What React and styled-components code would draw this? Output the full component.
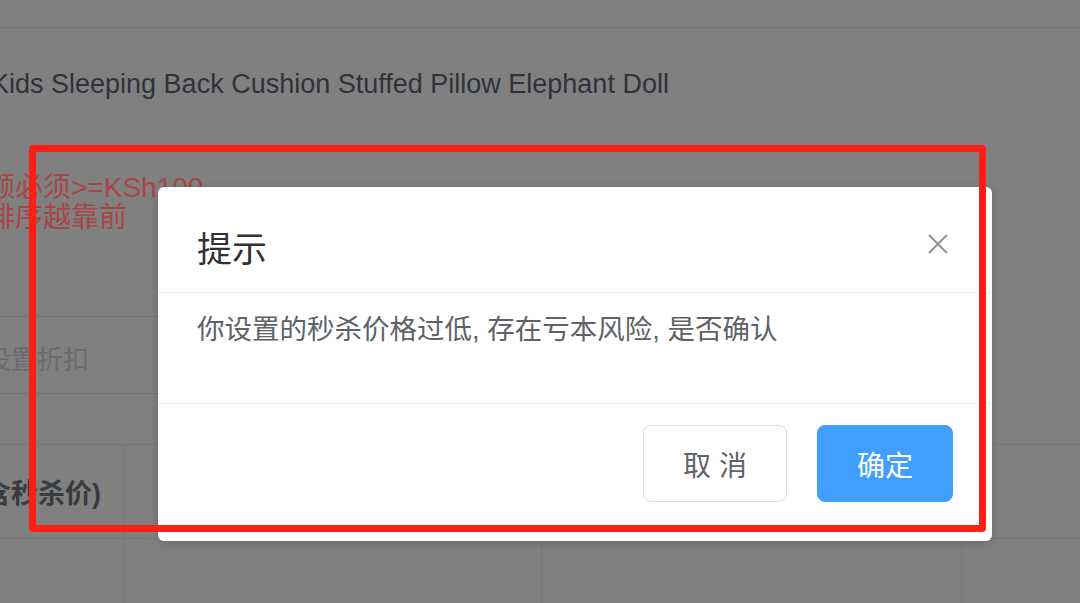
import React from "react";
import styled, { createGlobalStyle } from "styled-components";

const GlobalStyle = createGlobalStyle`
  html, body {
    margin: 0;
    padding: 0;
    background: #808080;
  }
  * {
    box-sizing: border-box;
  }
`;

const font = `"Liberation Sans", "Noto Sans CJK SC", sans-serif`;

// dimmed page behind the message box
const Page = styled.div`
  position: relative;
  width: 1080px;
  height: 603px;
  overflow: hidden;
  background: #808080;
  font-family: ${font};
`;

const TopStrip = styled.div`
  height: 28px;
  border-bottom: 1px solid #767676;
`;

const ProductTitle = styled.div`
  margin: 41px 0 0 -9px;
  font-size: 27px;
  line-height: 30px;
  color: #30323a;
  white-space: nowrap;
`;

const HintBlock = styled.div`
  margin: 74px 0 0 -13px;
  font-size: 28px;
  line-height: 30px;
  color: #a84646;
  white-space: nowrap;
`;

const DiscountInput = styled.div`
  margin: 83px 0 0 -18px;
  width: 440px;
  height: 78px;
  padding: 0 0 0 3px;
  display: flex;
  align-items: center;
  border-top: 1px solid #737373;
  border-bottom: 1px solid #737373;
  font-size: 26px;
  color: #6a6b6e;
  padding-top: 4px;
`;

const Table = styled.div`
  margin: 50px 0 0 -39px;
  border-top: 1px solid #76777a;
`;

const Row = styled.div`
  display: flex;
  height: ${(p) => p.height}px;
  border-bottom: 1px solid #76777a;
`;

const Cell = styled.div`
  flex: ${(p) => (p.width ? `0 0 ${p.width}px` : "1 1 auto")};
  display: flex;
  align-items: center;
  padding-left: 14px;
  border-right: ${(p) => (p.last ? "none" : "1px solid #76777a")};
  font-size: 27px;
  font-weight: 700;
  color: #393b40;
`;

// message box
const Dialog = styled.div`
  position: absolute;
  left: 158px;
  top: 187px;
  width: 834px;
  height: 354px;
  background: #fff;
  border-radius: 6px;
  box-shadow: 0 2px 10px rgba(0, 0, 0, 0.18);
  display: flex;
  flex-direction: column;
  font-family: ${font};
`;

const Header = styled.div`
  height: 106px;
  padding: 0 43px 0 39px;
  display: flex;
  align-items: center;
  justify-content: space-between;
  border-bottom: 1px solid #ebeef5;
`;

const Title = styled.div`
  font-size: 35px;
  color: #303133;
  padding-top: 14px;
`;

const CloseButton = styled.button`
  border: 0;
  background: none;
  padding: 0;
  width: 22px;
  height: 22px;
  display: flex;
  align-items: center;
  justify-content: center;
  cursor: pointer;
  margin-top: 8px;
`;

const Body = styled.div`
  height: 111px;
  padding: 17px 39px 0;
  font-size: 27.5px;
  line-height: 40px;
  color: #606266;
  border-bottom: 1px solid #ebeef5;
`;

const Footer = styled.div`
  flex: 1;
  display: flex;
  justify-content: flex-end;
  align-items: flex-start;
  gap: 30px;
  padding: 21px 39px 0;
`;

const Button = styled.button`
  width: ${(p) => p.width}px;
  height: 77px;
  border-radius: 8px;
  font-family: ${font};
  font-size: 28px;
  cursor: pointer;
  border: 1px solid ${(p) => (p.primary ? "#409eff" : "#dcdfe6")};
  background: ${(p) => (p.primary ? "#409eff" : "#fff")};
  color: ${(p) => (p.primary ? "#fff" : "#606266")};
`;

// hand-drawn highlight frame over the screenshot
const Annotation = styled.div`
  position: absolute;
  left: 29px;
  top: 145px;
  width: 957px;
  height: 387px;
  border: 7px solid #ff1e14;
  border-radius: 4px;
  pointer-events: none;
`;

const CloseIcon = () => (
  <svg width="20" height="20" viewBox="0 0 20 20">
    <path d="M1 1 L19 19 M19 1 L1 19" stroke="#909399" strokeWidth="2" fill="none" />
  </svg>
);

export default function App() {
  return (
    <>
      <GlobalStyle />
      <Page>
        <TopStrip />
        <ProductTitle>Kids Sleeping Back Cushion Stuffed Pillow Elephant Doll</ProductTitle>
        <HintBlock>
          <div>额必须&gt;=KSh100</div>
          <div>排序越靠前</div>
        </HintBlock>
        <DiscountInput>设置折扣</DiscountInput>
        <Table>
          <Row height={94}>
            <Cell width={163}>(含秒杀价)</Cell>
            <Cell last />
          </Row>
          <Row height={80}>
            <Cell width={163} />
            <Cell width={418} />
            <Cell width={420} />
            <Cell last />
          </Row>
        </Table>

        <Dialog>
          <Header>
            <Title>提示</Title>
            <CloseButton aria-label="close">
              <CloseIcon />
            </CloseButton>
          </Header>
          <Body>你设置的秒杀价格过低, 存在亏本风险, 是否确认</Body>
          <Footer>
            <Button width={144}>取 消</Button>
            <Button width={136} primary>
              确定
            </Button>
          </Footer>
        </Dialog>

        <Annotation />
      </Page>
    </>
  );
}
